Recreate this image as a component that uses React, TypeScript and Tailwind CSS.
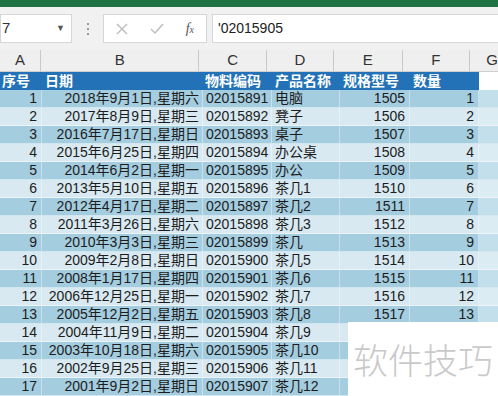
const rows = [
  ["1", "2018年9月1日,星期六", "02015891", "电脑", "1505", "1"],
  ["2", "2017年8月9日,星期三", "02015892", "凳子", "1506", "2"],
  ["3", "2016年7月17日,星期日", "02015893", "桌子", "1507", "3"],
  ["4", "2015年6月25日,星期四", "02015894", "办公桌", "1508", "4"],
  ["5", "2014年6月2日,星期一", "02015895", "办公", "1509", "5"],
  ["6", "2013年5月10日,星期五", "02015896", "茶几1", "1510", "6"],
  ["7", "2012年4月17日,星期二", "02015897", "茶几2", "1511", "7"],
  ["8", "2011年3月26日,星期六", "02015898", "茶几3", "1512", "8"],
  ["9", "2010年3月3日,星期三", "02015899", "茶几", "1513", "9"],
  ["10", "2009年2月8日,星期日", "02015900", "茶几5", "1514", "10"],
  ["11", "2008年1月17日,星期四", "02015901", "茶几6", "1515", "11"],
  ["12", "2006年12月25日,星期一", "02015902", "茶几7", "1516", "12"],
  ["13", "2005年12月2日,星期五", "02015903", "茶几8", "1517", "13"],
  // E/F of the last rows sit under the watermark box
  ["14", "2004年11月9日,星期二", "02015904", "茶几9", "", ""],
  ["15", "2003年10月18日,星期六", "02015905", "茶几10", "", ""],
  ["16", "2002年9月25日,星期三", "02015906", "茶几11", "", ""],
  ["17", "2001年9月2日,星期日", "02015907", "茶几12", "", ""],
]

const cols = [
  { letter: "A", w: "w-[42px]", align: "justify-end pr-[4px]", head: "序号", headPad: "pl-[2px]" },
  { letter: "B", w: "w-[161px]", align: "justify-end pr-[3px]", head: "日期", headPad: "pl-[3px]" },
  { letter: "C", w: "w-[69px]", align: "justify-start pl-[3px]", head: "物料编码", headPad: "pl-[2px]" },
  { letter: "D", w: "w-[68px]", align: "justify-start pl-[3px]", head: "产品名称", headPad: "pl-[3px]" },
  { letter: "E", w: "w-[70px]", align: "justify-end pr-[4px]", head: "规格型号", headPad: "pl-[3px]" },
  { letter: "F", w: "w-[69px]", align: "justify-end pr-[4px]", head: "数量", headPad: "pl-[3px]" },
]

export default function App() {
  return (
    <div
      className="relative w-[498px] h-[396px] overflow-hidden bg-white"
      style={{ fontFamily: '"Liberation Sans", "Noto Sans CJK SC", sans-serif' }}
    >
      <div className="h-[7px] bg-[#1f7244]" />

      {/* formula bar */}
      <div className="h-[43px] bg-[#f1f1f1] flex items-center">
        <div className="w-[72px] h-[29px] bg-white border border-[#d6d6d6] flex items-center justify-between pl-[1px] pr-[6px] text-[15px] text-[#333]">
          <span>7</span>
          <span className="text-[9px] text-[#555]">▼</span>
        </div>
        <div className="w-[31px] flex flex-col items-center gap-[3px]">
          <span className="w-[2px] h-[2px] bg-[#9a9a9a]" />
          <span className="w-[2px] h-[2px] bg-[#9a9a9a]" />
          <span className="w-[2px] h-[2px] bg-[#9a9a9a]" />
        </div>
        <div className="w-[104px] h-[29px] bg-white border border-[#d6d6d6] flex items-center px-[12px] justify-between">
          <svg width="12" height="12" viewBox="0 0 12 12">
            <path d="M1 1L11 11M11 1L1 11" stroke="#bcbcbc" strokeWidth="1.4" />
          </svg>
          <svg width="14" height="12" viewBox="0 0 14 12">
            <path d="M1 6L5 10L13 1" stroke="#bcbcbc" strokeWidth="1.4" fill="none" />
          </svg>
          <span className="italic text-[14px] text-[#555]" style={{ fontFamily: '"Liberation Serif", serif' }}>
            f<span className="text-[10px]">x</span>
          </span>
        </div>
        <div className="ml-[5px] flex-1 h-[29px] bg-white border-y border-l border-[#d6d6d6] flex items-center pl-[5px] text-[14px] text-[#222]">
          '02015905
        </div>
      </div>

      {/* column letters */}
      <div className="h-[22px] bg-[#efefef] flex border-b border-[#cfcfcf] text-[15px] text-[#333]">
        {cols.map((c) => (
          <div key={c.letter} className={`${c.w} flex items-center justify-center border-r border-[#c9c9c9]`}>
            {c.letter}
          </div>
        ))}
        <div className="flex-1 flex items-center pl-[16px]">G</div>
      </div>

      {/* header row */}
      <div className="h-[18px] flex text-[14px] text-white font-bold">
        {cols.map((c) => (
          <div key={c.letter} className={`${c.w} ${c.headPad} bg-[#2372b8] flex items-center whitespace-nowrap`}>
            {c.head}
          </div>
        ))}
        <div className="flex-1 bg-white" />
      </div>

      {/* data rows */}
      {rows.map((r, i) => {
        const odd = i % 2 === 0
        return (
          <div
            key={r[0]}
            className={`h-[18px] flex text-[14px] text-[#1c1c1c] border-b border-white/50 ${odd ? "bg-[#a4cde0]" : "bg-[#d8e9f1]"}`}
          >
            {cols.map((c, j) => (
              <div
                key={c.letter}
                className={`${c.w} ${c.align} flex items-center whitespace-nowrap border-r border-white/40`}
              >
                {r[j]}
              </div>
            ))}
            <div className={`flex-1 ${odd ? "bg-[#c3dfeb]" : "bg-[#dcecf3]"}`} />
          </div>
        )
      })}

      {/* watermark */}
      <div className="absolute left-[348px] top-[322px] w-[150px] h-[74px] bg-white flex items-center justify-center">
        <span
          className="text-[35px] text-[#c9c9c9]"
          style={{ fontFamily: '"Noto Sans CJK SC", sans-serif', fontWeight: 300 }}
        >
          软件技巧
        </span>
      </div>
    </div>
  )
}
